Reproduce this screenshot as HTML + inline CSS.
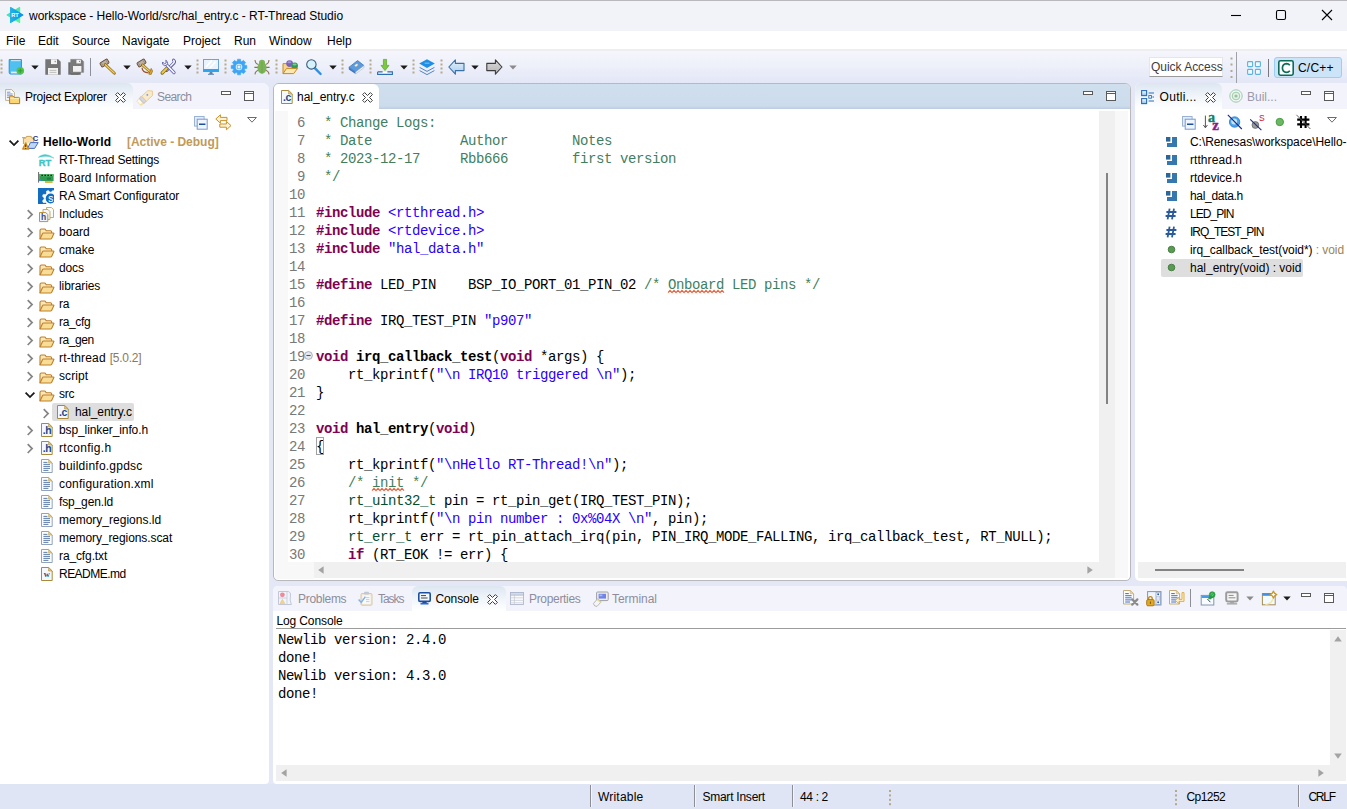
<!DOCTYPE html>
<html lang="en">
<head>
<meta charset="utf-8">
<title>workspace - Hello-World/src/hal_entry.c - RT-Thread Studio</title>
<style>
*{box-sizing:border-box;margin:0;padding:0}
html,body{width:1347px;height:809px;overflow:hidden}
body{position:relative;background:#e3e7f6;font-family:"Liberation Sans",sans-serif;font-size:12px;color:#000;line-height:1}
.abs,.t{position:absolute}
.t{white-space:pre;line-height:16px;height:16px}
svg{position:absolute;overflow:visible}
/* title + menu + toolbar */
#titlebar{left:0;top:0;width:1347px;height:31px;background:#f2f3f9}
#menubar{left:0;top:31px;width:1347px;height:20px;background:#fff;border-bottom:2px solid #eeeef0}
#toolbar{left:0;top:51px;width:1347px;height:32px;background:linear-gradient(#f5f6fc,#eef0fa 45%,#e3e7f6)}
.menu{top:33px}
/* panels */
.panel{position:absolute;background:#fff;overflow:hidden}
.mono{font-family:"Liberation Mono",monospace;font-size:14px;letter-spacing:-0.4px}
.cl{height:18px;line-height:18px}
.row{position:absolute;left:0;height:20px;line-height:20px;white-space:pre}
.dim{color:#8a8a8a}
/* code colours */
.ln{color:#787878}
.cm{color:#3f7f5f}
.kw{color:#7f0055;font-weight:bold}
.st{color:#2a00ff}
.fn{font-weight:bold}
.ty{color:#005032}
.sq{}
</style>
</head>
<body>

<!-- TITLE BAR -->
<div id="titlebar" class="abs"></div>
<div class="abs" style="left:0;top:0;width:1347px;height:1px;background:#b9b9bd"></div>
<svg style="left:5px;top:6px" width="20" height="18" viewBox="0 0 20 18">
 <defs><linearGradient id="gA" x1="0" y1="0" x2="1" y2="1"><stop offset="0" stop-color="#2fe0b0"/><stop offset="1" stop-color="#5cf59a"/></linearGradient>
 <linearGradient id="gB" x1="0" y1="0" x2="1" y2="0"><stop offset="0" stop-color="#1fb4e6"/><stop offset="1" stop-color="#0b8fe8"/></linearGradient></defs>
 <path d="M2.2 9 L14.6 1.6 L14.6 16.4 Z" fill="url(#gA)" stroke="url(#gA)" stroke-width="1.2" stroke-linejoin="round"/>
 <path d="M17.8 9 L5.6 1.6 L5.6 16.4 Z" fill="url(#gB)" stroke="url(#gB)" stroke-width="1.2" stroke-linejoin="round"/>
 <text x="10" y="11.2" font-family="Liberation Sans, sans-serif" font-weight="bold" font-size="5.6" fill="#fff" text-anchor="middle">RT</text>
</svg>
<div class="t" style="left:29px;top:8px;letter-spacing:-0.036px">workspace - Hello-World/src/hal_entry.c - RT-Thread Studio</div>
<svg style="left:1226px;top:5px" width="112" height="20" viewBox="0 0 112 20" fill="none" stroke="#000" stroke-width="1.1">
 <path d="M5 10.5 H15"/>
 <rect x="50.5" y="5.5" width="9" height="9" rx="1.6"/>
 <path d="M96 5 L106 15 M106 5 L96 15"/>
</svg>

<!-- MENU BAR -->
<div id="menubar" class="abs"></div>
<div class="t menu" style="left:6px">File</div>
<div class="t menu" style="left:38px">Edit</div>
<div class="t menu" style="left:72px">Source</div>
<div class="t menu" style="left:122px">Navigate</div>
<div class="t menu" style="left:183px">Project</div>
<div class="t menu" style="left:234px">Run</div>
<div class="t menu" style="left:269px">Window</div>
<div class="t menu" style="left:327px">Help</div>

<!-- TOOLBAR -->
<div id="toolbar" class="abs"></div>
<svg style="left:0px;top:59px" width="3" height="17" viewBox="0 0 3 17"><g fill="#b5a98c"><rect x="0.5" y="0.5" width="2" height="2"/><rect x="0.5" y="4.5" width="2" height="2"/><rect x="0.5" y="8.5" width="2" height="2"/><rect x="0.5" y="12.5" width="2" height="2"/></g></svg>
<svg style="left:8px;top:59px" width="17" height="16" viewBox="0 0 17 16">
<path d="M1.2 0.6 H13.4 V15 H2.6 Q1.2 15 1.2 13.6 Z" fill="#4fc0f0" stroke="#2b8fd6" stroke-width="1"/>
<rect x="3" y="1" width="9.6" height="1.2" fill="#bfe6fa"/>
<rect x="3" y="12.6" width="8" height="1.8" fill="#d8effc"/>
<circle cx="12.3" cy="11.8" r="3.8" fill="#52c24a"/>
<path d="M12.3 9.6 V14 M10.1 11.8 H14.5" stroke="#2f9e35" stroke-width="1"/>
</svg>
<svg style="left:31px;top:65px" width="8" height="5" viewBox="0 0 8 5"><path d="M0.3 0.5 H7.7 L4 4.4 Z" fill="#1a1a1a"/></svg>
<svg style="left:45px;top:59px" width="16" height="16" viewBox="0 0 16 16">
<path d="M0.3 0.3 H13.2 L15.7 2.8 V15.7 H0.3 Z" fill="#757575"/>
<rect x="6" y="0.3" width="6" height="4.8" fill="#f4f4f4"/><rect x="9.6" y="1.8" width="1.2" height="1.4" fill="#8a8a8a"/>
<rect x="3" y="9" width="10" height="6.7" fill="#f1f1ef"/>
<path d="M4.6 11.4 H11.4 M4.6 13.4 H11.4" stroke="#b9b9b9" stroke-width="0.9"/>
</svg>
<svg style="left:68px;top:59px" width="16" height="16" viewBox="0 0 16 16">
<path d="M0.3 3.3 H3 V15.7 H12.7 V13 H3 V3.3 Z" fill="#6a6a6a"/>
<path d="M0.3 3.3 H11 V15.7 H0.3 Z" fill="#6e6e6e"/>
<path d="M2.6 0.3 H13.4 L15.7 2.6 V13.4 H2.6 Z" fill="#7a7a7a" stroke="#8e8e8e" stroke-width="0.4"/>
<rect x="8.4" y="0.8" width="4.4" height="3.6" fill="#f4f4f4"/><rect x="11" y="1.8" width="1" height="1.2" fill="#8a8a8a"/>
<rect x="5" y="7" width="8.4" height="5.8" fill="#f1f1f1"/>
</svg>
<div class="abs" style="left:90px;top:58px;width:1px;height:18px;background:#8e8e9c"></div>
<svg style="left:100px;top:59px" width="16" height="16" viewBox="0 0 16 16"><g transform="rotate(-32 4.5 4)"><rect x="0.2" y="1.6" width="8.6" height="4.8" rx="1.2" fill="#b9b1a6" stroke="#6b4a36" stroke-width="0.9"/><path d="M1.8 2.6 V5.4 M7.2 2.6 V5.4" stroke="#8d8478" stroke-width="0.8"/></g>
<path d="M5.2 5.6 L14.4 14.2" stroke="#8a6a1a" stroke-width="2.8" stroke-linecap="round"/>
<path d="M5.4 5.8 L14.2 14" stroke="#f3ce54" stroke-width="1.4" stroke-linecap="round"/></svg>
<svg style="left:123px;top:65px" width="8" height="5" viewBox="0 0 8 5"><path d="M0.3 0.5 H7.7 L4 4.4 Z" fill="#1a1a1a"/></svg>
<svg style="left:137px;top:59px" width="17" height="16" viewBox="0 0 17 16">
<path d="M5 8.6 Q5.4 13.6 11.6 13.8" fill="none" stroke="#a0522d" stroke-width="1.2"/>
<g transform="rotate(-32 4.5 4)"><rect x="0.2" y="1.6" width="8.6" height="4.8" rx="1.2" fill="#b9b1a6" stroke="#6b4a36" stroke-width="0.9"/><path d="M1.8 2.6 V5.4 M7.2 2.6 V5.4" stroke="#8d8478" stroke-width="0.8"/></g>
<path d="M5.4 5.8 L13 12.8" stroke="#8a6a1a" stroke-width="2.6" stroke-linecap="round"/>
<path d="M5.6 6 L12.8 12.6" stroke="#f3ce54" stroke-width="1.3" stroke-linecap="round"/>
<path d="M14.2 9.4 L15.6 12 L14.2 15.4 L11.8 15.2 Z" fill="#e0a62a" stroke="#9a6a14" stroke-width="0.7"/>
</svg>
<svg style="left:160px;top:59px" width="17" height="16" viewBox="0 0 17 16">
<path d="M13.6 1.2 Q15.2 2.4 13.8 4.2 L6.6 11.4" fill="none" stroke="#5b5ba8" stroke-width="3.2" stroke-linecap="round"/>
<path d="M13.6 1.4 Q14.8 2.4 13.6 4 L6.6 11.2" fill="none" stroke="#f4f4fb" stroke-width="1.6" stroke-linecap="round"/>
<path d="M2.2 14 L7 9.2" stroke="#7d6a2a" stroke-width="3.4" stroke-linecap="round"/>
<path d="M2.4 13.8 L6.8 9.4" stroke="#f2c93e" stroke-width="2" stroke-linecap="round"/>
<path d="M6.4 5.6 L14 13.6" stroke="#5b5ba8" stroke-width="3.2" stroke-linecap="round"/>
<path d="M6.4 5.6 L14 13.6" stroke="#f4f4fb" stroke-width="1.6" stroke-linecap="round"/>
<path d="M2.6 3 Q1.6 5.6 4.4 6.6 Q7 7 7.6 4.6 Q7.6 2 5.8 1.2 L6.2 3.8 L4.6 4.8 L3.2 3.8 Z" fill="#f4f4fb" stroke="#5b5ba8" stroke-width="0.9" stroke-linejoin="round"/>
</svg>
<svg style="left:184px;top:65px" width="8" height="5" viewBox="0 0 8 5"><path d="M0.3 0.5 H7.7 L4 4.4 Z" fill="#1a1a1a"/></svg>
<svg style="left:196px;top:59px" width="3" height="17" viewBox="0 0 3 17"><g fill="#b5a98c"><rect x="0.5" y="0.5" width="2" height="2"/><rect x="0.5" y="4.5" width="2" height="2"/><rect x="0.5" y="8.5" width="2" height="2"/><rect x="0.5" y="12.5" width="2" height="2"/></g></svg>
<svg style="left:203px;top:59px" width="16" height="16" viewBox="0 0 16 16">
<rect x="0.5" y="0.5" width="15" height="12" fill="#e9f3fc" stroke="#6aa4dc" stroke-width="1"/>
<path d="M3 8 L9 1.4 M7 9 L12.6 2.6" stroke="#fff" stroke-width="1.6"/>
<rect x="0.2" y="10" width="15.6" height="2.9" fill="#2fa4ee"/>
<path d="M6.8 12.9 H9.2 L9.8 15 H6.2 Z" fill="#5a86ac"/>
<rect x="5" y="14.8" width="6" height="1" fill="#5a86ac"/>
</svg>
<svg style="left:224px;top:59px" width="3" height="17" viewBox="0 0 3 17"><g fill="#b5a98c"><rect x="0.5" y="0.5" width="2" height="2"/><rect x="0.5" y="4.5" width="2" height="2"/><rect x="0.5" y="8.5" width="2" height="2"/><rect x="0.5" y="12.5" width="2" height="2"/></g></svg>
<svg style="left:231px;top:59px" width="16" height="16" viewBox="0 0 16 16">
<path d="M6.41 0.16 L9.59 0.16 L9.80 2.17 L10.85 2.60 L12.42 1.33 L14.67 3.58 L13.40 5.15 L13.83 6.20 L15.84 6.41 L15.84 9.59 L13.83 9.80 L13.40 10.85 L14.67 12.42 L12.42 14.67 L10.85 13.40 L9.80 13.83 L9.59 15.84 L6.41 15.84 L6.20 13.83 L5.15 13.40 L3.58 14.67 L1.33 12.42 L2.60 10.85 L2.17 9.80 L0.16 9.59 L0.16 6.41 L2.17 6.20 L2.60 5.15 L1.33 3.58 L3.58 1.33 L5.15 2.60 L6.20 2.17 Z" fill="#3da5f3" stroke="#3da5f3" stroke-width="0.5" stroke-linejoin="round"/>
<circle cx="8" cy="8" r="3.3" fill="#d6ebfb"/>
<rect x="6.3" y="6.3" width="3.4" height="3.4" fill="#eaf4fd" stroke="#6fb8f2" stroke-width="0.8"/>
</svg>
<svg style="left:254px;top:59px" width="16" height="16" viewBox="0 0 16 16">
<g fill="none" stroke="#8d6e54" stroke-width="1.1"><path d="M1 1 Q1.2 4.6 4.4 5.6 M15 1 Q14.8 4.6 11.6 5.6 M0.4 8.4 H4 M15.6 8.4 H12 M1 15.4 Q1.2 12 4.4 11.2 M15 15.4 Q14.8 12 11.6 11.2"/></g>
<ellipse cx="8" cy="3.6" rx="3" ry="2.8" fill="#7bb458"/>
<ellipse cx="8" cy="8.8" rx="4.6" ry="5.9" fill="#7bb458"/>
<path d="M8 3 V14.6" stroke="#6aa048" stroke-width="0.7"/>
</svg>
<svg style="left:275px;top:59px" width="3" height="17" viewBox="0 0 3 17"><g fill="#b5a98c"><rect x="0.5" y="0.5" width="2" height="2"/><rect x="0.5" y="4.5" width="2" height="2"/><rect x="0.5" y="8.5" width="2" height="2"/><rect x="0.5" y="12.5" width="2" height="2"/></g></svg>
<svg style="left:282px;top:59px" width="17" height="16" viewBox="0 0 17 16">
<path d="M1 14.6 V4.6 H5.6 L7 6.2 H13 V9" fill="#f7d58c" stroke="#c98a1e" stroke-width="1"/>
<circle cx="7.6" cy="4.6" r="3.4" fill="#7a62b8"/><ellipse cx="7.4" cy="3.2" rx="2" ry="1" fill="#a595d6"/>
<circle cx="12.6" cy="6.8" r="3.4" fill="#2f9a56"/><ellipse cx="12.6" cy="5.4" rx="2" ry="1" fill="#7cc998"/>
<path d="M1 14.6 L4.6 9.4 H15.6 L11.6 14.6 Z" fill="#fbe7b4" stroke="#c98a1e" stroke-width="1" stroke-linejoin="round"/>
</svg>
<svg style="left:306px;top:59px" width="16" height="16" viewBox="0 0 16 16">
<path d="M8.6 8.8 L14.6 15" stroke="#2f8fe0" stroke-width="2.4" stroke-linecap="round"/>
<circle cx="5.4" cy="5.4" r="4.7" fill="#d3f2fb" stroke="#3d5a78" stroke-width="1.1"/>
</svg>
<svg style="left:329px;top:65px" width="8" height="5" viewBox="0 0 8 5"><path d="M0.3 0.5 H7.7 L4 4.4 Z" fill="#1a1a1a"/></svg>
<svg style="left:341px;top:59px" width="3" height="17" viewBox="0 0 3 17"><g fill="#b5a98c"><rect x="0.5" y="0.5" width="2" height="2"/><rect x="0.5" y="4.5" width="2" height="2"/><rect x="0.5" y="8.5" width="2" height="2"/><rect x="0.5" y="12.5" width="2" height="2"/></g></svg>
<svg style="left:348px;top:59px" width="17" height="16" viewBox="0 0 17 16">
<path d="M0.8 8.4 L9.6 1.6 L16 6.6 L7.6 13 Z" fill="#5c9be0" stroke="#3f78bc" stroke-width="0.8" stroke-linejoin="round"/>
<path d="M0.8 8.4 L7.6 13 L7.6 15 L0.8 10.4 Z" fill="#3f78bc"/>
<path d="M7.6 13 L16 6.6 V8.6 L7.6 15 Z" fill="#f4f4f4" stroke="#9ab" stroke-width="0.5"/>
<rect x="6.6" y="5.2" width="3.4" height="2" rx="1" fill="#fbf3dc" stroke="#c9b27a" stroke-width="0.5" transform="rotate(-30 8.3 6.2)"/>
</svg>
<svg style="left:369px;top:59px" width="3" height="17" viewBox="0 0 3 17"><g fill="#b5a98c"><rect x="0.5" y="0.5" width="2" height="2"/><rect x="0.5" y="4.5" width="2" height="2"/><rect x="0.5" y="8.5" width="2" height="2"/><rect x="0.5" y="12.5" width="2" height="2"/></g></svg>
<svg style="left:377px;top:59px" width="16" height="16" viewBox="0 0 16 16">
<path d="M6.4 0.4 H9.6 V6.4 H12 L8 11.6 L4 6.4 H6.4 Z" fill="#7cc840" stroke="#5aa02a" stroke-width="0.7" stroke-linejoin="round"/>
<path d="M0.6 12.9 H5.6 M10.4 12.9 H15.4 V15.4 H0.6 V12.9" fill="#fff" stroke="#2d6eb0" stroke-width="1.1"/>
</svg>
<svg style="left:400px;top:65px" width="8" height="5" viewBox="0 0 8 5"><path d="M0.3 0.5 H7.7 L4 4.4 Z" fill="#1a1a1a"/></svg>
<svg style="left:412px;top:59px" width="3" height="17" viewBox="0 0 3 17"><g fill="#b5a98c"><rect x="0.5" y="0.5" width="2" height="2"/><rect x="0.5" y="4.5" width="2" height="2"/><rect x="0.5" y="8.5" width="2" height="2"/><rect x="0.5" y="12.5" width="2" height="2"/></g></svg>
<svg style="left:419px;top:59px" width="16" height="16" viewBox="0 0 16 16">
<path d="M8 0.2 L15.8 4.6 L8 9 L0.2 4.6 Z" fill="#1f8fe6"/>
<path d="M5.6 4.2 H10.4" stroke="#7cc2f4" stroke-width="1.1"/>
<path d="M0.6 8.4 L8 12.4 L15.4 8.4 M0.6 11.6 L8 15.6 L15.4 11.6" fill="none" stroke="#3f78bc" stroke-width="0.9"/>
</svg>
<svg style="left:440px;top:59px" width="3" height="17" viewBox="0 0 3 17"><g fill="#b5a98c"><rect x="0.5" y="0.5" width="2" height="2"/><rect x="0.5" y="4.5" width="2" height="2"/><rect x="0.5" y="8.5" width="2" height="2"/><rect x="0.5" y="12.5" width="2" height="2"/></g></svg>
<svg style="left:448px;top:59px" width="17" height="16" viewBox="0 0 17 16">
<defs><linearGradient id="gBk" x1="0" y1="0" x2="0" y2="1"><stop offset="0" stop-color="#e4f1fb"/><stop offset="1" stop-color="#a9cdec"/></linearGradient></defs>
<path d="M7.4 0.8 V4.4 H16 V11.6 H7.4 V15.2 L0.8 8 Z" fill="url(#gBk)" stroke="#3a70a8" stroke-width="1.1" stroke-linejoin="round"/>
</svg>
<svg style="left:471px;top:65px" width="8" height="5" viewBox="0 0 8 5"><path d="M0.3 0.5 H7.7 L4 4.4 Z" fill="#1a1a1a"/></svg>
<svg style="left:486px;top:59px" width="17" height="16" viewBox="0 0 17 16">
<defs><linearGradient id="gFw" x1="0" y1="0" x2="0" y2="1"><stop offset="0" stop-color="#dadada"/><stop offset="1" stop-color="#b4b4b4"/></linearGradient></defs>
<path d="M9.4 0.8 V4.4 H0.8 V11.6 H9.4 V15.2 L16 8 Z" fill="url(#gFw)" stroke="#3c3c3c" stroke-width="1.1" stroke-linejoin="round"/>
</svg>
<svg style="left:509px;top:65px" width="8" height="5" viewBox="0 0 8 5"><path d="M0.3 0.5 H7.7 L4 4.4 Z" fill="#8a8a8a"/></svg>
<div class="abs" style="left:1149px;top:57px;width:74px;height:20px;background:#fff;border:1px solid #e6e6ea;border-bottom-color:#9a9a9a"></div>
<div class="t" style="left:1151px;top:59px;color:#3c3c3c;letter-spacing:-0.03px">Quick Access</div>
<svg style="left:1230px;top:57px" width="3" height="21" viewBox="0 0 3 21"><g fill="#b5a98c"><rect x="0.5" y="0.5" width="2" height="2"/><rect x="0.5" y="6.5" width="2" height="2"/><rect x="0.5" y="13" width="2" height="2"/><rect x="0.5" y="19" width="2" height="2"/></g></svg>
<div class="abs" style="left:1236px;top:52px;width:1px;height:31px;background:#a0a0a8"></div>
<svg style="left:1247px;top:61px" width="14" height="14" viewBox="0 0 14 14" fill="#eef8fd" stroke="#5cb3de" stroke-width="1.1">
<rect x="0.6" y="0.6" width="5" height="5" rx="0.8"/><rect x="8.4" y="0.6" width="5" height="5" rx="0.8"/><rect x="0.6" y="8.4" width="5" height="5" rx="0.8"/><rect x="8.4" y="8.4" width="5" height="5" rx="0.8"/></svg>
<div class="abs" style="left:1268px;top:59px;width:1px;height:18px;background:#77777f"></div>
<div class="abs" style="left:1274px;top:57px;width:68px;height:21px;background:#cce4f7;border:1px solid #9ccdf5;border-radius:3px"></div>
<svg style="left:1278px;top:60px" width="16" height="16" viewBox="0 0 16 16"><rect x="0.8" y="0.8" width="14.4" height="14.4" rx="1.6" fill="#fff" stroke="#0d6b58" stroke-width="1.6"/>
<path d="M11.8 5.2 Q10.6 3.6 8.4 3.6 Q4.6 3.8 4.4 8 Q4.6 12.2 8.4 12.4 Q10.6 12.4 11.8 10.8" fill="none" stroke="#0d6b58" stroke-width="1.7"/></svg>
<div class="t" style="left:1298px;top:60px;letter-spacing:0.2px">C/C++</div>


<!-- LEFT PANEL -->
<div id="left" class="panel" style="left:0;top:83px;width:269px;height:701px;border-radius:0 7px 4px 0"><div class="abs" style="left:0;top:1px;width:269px;height:699px">
<div class="abs" style="left:0;top:-1px;width:269px;height:26px;background:#f3f4fb"></div>
<div class="abs" style="left:0;top:-1px;width:133px;height:26px;background:linear-gradient(#dde6f1,#f2f6fa 55%,#fff);border-radius:0 6px 0 0"></div>
<svg style="left:5px;top:5px" width="16" height="16" viewBox="0 0 16 16"><path d="M0.6 0.6 H6.6 L9.4 3.4 V11.4 H0.6 Z" fill="#fbfcfe" stroke="#b9a98a" stroke-width="0.9"/><path d="M2 3.2 H5.4 M2 5 H7.6 M2 6.8 H7.6 M2 8.6 H4.4" stroke="#5a7abf" stroke-width="0.8"/><path d="M4.6 14.6 V8 Q4.6 7 5.6 7 H8 L9 8.4 H13.6 Q14.6 8.4 14.6 9.4 V14.6 Z" fill="#fbd774" stroke="#b9782e" stroke-width="1" stroke-linejoin="round"/><path d="M5.4 9.4 H14" stroke="#fdeeb8" stroke-width="0.9"/></svg>
<div class="t" style="left:25px;top:5px;letter-spacing:-0.22px">Project Explorer</div>
<svg style="left:115px;top:8px" width="11" height="11" viewBox="0 0 11 11"><path d="M0.6 2.6 L2.6 0.6 L5.5 3.5 L8.4 0.6 L10.4 2.6 L7.5 5.5 L10.4 8.4 L8.4 10.4 L5.5 7.5 L2.6 10.4 L0.6 8.4 L3.5 5.5 Z" fill="#fff" stroke="#3f3f3f" stroke-width="1" stroke-linejoin="round"/></svg>
<svg style="left:136px;top:5px;opacity:.62" width="18" height="17" viewBox="0 0 18 17"><g transform="translate(9.2 8.6) rotate(-42)"><path d="M-8.6 -3 L-5 -3.4 V3.4 L-8.6 3 Z" fill="#fffdf0" stroke="#f0d070" stroke-width="0.8"/><path d="M-8.6 2.2 L-5.4 2.6" stroke="#f5d860" stroke-width="1.4"/><rect x="-5" y="-3.6" width="3.4" height="7.2" rx="1.2" fill="#c4c4d0" stroke="#a89878" stroke-width="0.8"/><path d="M-1.6 -3.4 H6.6 L9.8 0 L6.6 3.4 H-1.6 Z" fill="#fbe6b0" stroke="#e8b050" stroke-width="0.9" stroke-linejoin="round"/><circle cx="3.4" cy="-0.6" r="1" fill="#3a6ad8"/></g></svg>
<div class="t" style="left:157px;top:5px;color:#8d8d9b;letter-spacing:-0.6px">Search</div>
<svg style="left:221px;top:7px" width="10" height="5" viewBox="0 0 10 5"><rect x="0.5" y="0.5" width="9" height="3" fill="#fff" stroke="#5a5a5a" stroke-width="1"/></svg>
<svg style="left:244px;top:7px" width="10" height="10" viewBox="0 0 10 10"><rect x="0.5" y="0.5" width="9" height="9" fill="#fff" stroke="#5a5a5a" stroke-width="1"/><path d="M0.5 2.5 H9.5" stroke="#5a5a5a" stroke-width="1"/></svg>
<svg style="left:194px;top:32px" width="14" height="14" viewBox="0 0 14 14"><rect x="0.5" y="0.5" width="9.6" height="9.6" fill="#e4eefb" stroke="#9ab2d6" stroke-width="1"/><rect x="3.2" y="3.2" width="10" height="10" fill="#eef5fd" stroke="#7a9acb" stroke-width="1"/><path d="M5 8.2 H11.4" stroke="#1d4f9c" stroke-width="1.6"/></svg>
<svg style="left:215px;top:30px" width="17" height="17" viewBox="0 0 17 17"><path d="M0.8 5 L5.4 0.8 V3.4 H12 V6.6 H5.4 V9.2 Z" fill="#fdf3d4" stroke="#c8922a" stroke-width="1" stroke-linejoin="round"/><path d="M16 11.6 L11.4 7.4 V10 H4.8 V13.2 H11.4 V15.8 Z" fill="#fdf3d4" stroke="#c8922a" stroke-width="1" stroke-linejoin="round"/></svg>
<svg style="left:247px;top:33px" width="10" height="6" viewBox="0 0 10 6"><path d="M0.6 0.5 H9.4 L5 5.2 Z" fill="#fff" stroke="#5a5a5a" stroke-width="0.9" stroke-linejoin="round"/></svg>
<svg style="left:8.5px;top:56px" width="10" height="6" viewBox="0 0 10 6"><path d="M0.6 0.7 L5 5.1 L9.4 0.7" fill="none" stroke="#1a1a1a" stroke-width="1.8"/></svg>
<svg style="left:21px;top:51px" width="18" height="16" viewBox="0 0 18 16"><path d="M1 2.6 H4.4" stroke="#8a94b0" stroke-width="0.8"/><path d="M2.4 9 V3.2 H4.6 L5.4 1.4 H10.2 L11 3.2 H12.8 V7" fill="#f9dfa6" stroke="#c09a50" stroke-width="0.9" stroke-linejoin="round"/><path d="M6.6 13.4 L9.4 7.6 H17.2 L13.6 13.4 Z" fill="#bdd8f5" stroke="#4a6ac0" stroke-width="1" stroke-linejoin="round"/><text x="14.6" y="6" font-family="Liberation Sans, sans-serif" font-weight="bold" font-size="7.6" fill="#173a86" text-anchor="middle">C</text><path d="M4.7 8 L7.6 14 H1.8 Z" fill="#fbd35a" stroke="#d08a1c" stroke-width="1.5" stroke-linejoin="round"/><path d="M4.7 9.6 V12.2 M4.7 13 V13.9" stroke="#3a2a10" stroke-width="1"/></svg>
<div class="row" style="left:43px;top:48px;font-weight:bold;letter-spacing:0.089px">Hello-World</div>
<div class="row" style="left:127px;top:48px;font-weight:bold;color:#bf9a5a;letter-spacing:-0.021px">[Active - Debug]</div>
<svg style="left:38px;top:70px" width="16" height="13" viewBox="0 0 16 13"><path d="M0.2 3.4 Q1.6 1.6 4.4 0.9 Q10.2 -0.6 16 4.2 Q10.4 1.6 5.4 2.4 Q2.4 2.8 0.2 3.4 Z" fill="#49c9c9" stroke="#49c9c9" stroke-width="0.4"/><text x="6.9" y="12.4" font-family="Liberation Sans, sans-serif" font-weight="bold" font-size="9.4" fill="#3ec4c4" stroke="#3ec4c4" stroke-width="0.35" text-anchor="middle" letter-spacing="-0.2">RT</text></svg>
<div class="row" style="left:59px;top:66px;letter-spacing:-0.208px">RT-Thread Settings</div>
<svg style="left:38px;top:88px" width="16" height="12" viewBox="0 0 16 12"><path d="M0.6 0 V10.6" stroke="#666" stroke-width="1"/><rect x="1.2" y="2" width="14.4" height="7" fill="#2f9a50"/><rect x="1.2" y="2" width="14.4" height="2.2" fill="#57b86c"/><path d="M3.4 3.4 H5 M6.4 3.4 H8 M9.4 3.4 H11 M12.4 3.4 H14" stroke="#1a1a1a" stroke-width="1.4"/><rect x="1.2" y="7" width="2" height="2" fill="#2f8fe8"/><rect x="7" y="9" width="7.6" height="2" fill="#d8b84a"/><rect x="9" y="5.6" width="4" height="2" fill="#1f7a3c"/></svg>
<div class="row" style="left:59px;top:84px;letter-spacing:0.107px">Board Information</div>
<svg style="left:38px;top:104px;overflow:hidden" width="16" height="16" viewBox="0 0 16 16"><rect width="16" height="16" fill="#126dc0"/><g transform="translate(12.6 10.5)"><path d="M2.24 -8.10 L4.10 -7.33 L4.07 -4.94 L4.91 -4.10 L7.31 -4.14 L8.08 -2.28 L6.37 -0.61 L6.37 0.58 L8.10 2.24 L7.33 4.10 L4.94 4.07 L4.10 4.91 L4.14 7.31 L2.28 8.08 L0.61 6.37 L-0.58 6.37 L-2.24 8.10 L-4.10 7.33 L-4.07 4.94 L-4.91 4.10 L-7.31 4.14 L-8.08 2.28 L-6.37 0.61 L-6.37 -0.58 L-8.10 -2.24 L-7.33 -4.10 L-4.94 -4.07 L-4.10 -4.91 L-4.14 -7.31 L-2.28 -8.08 L-0.61 -6.37 L0.58 -6.37 Z" fill="#fff" stroke="#fff" stroke-width="0.6" stroke-linejoin="round"/><circle r="4.9" fill="#126dc0"/></g><text transform="translate(12.7 13.8) scale(0.78 1)" x="0" y="0" font-family="Liberation Sans, sans-serif" font-size="9.4" fill="#fff" stroke="#fff" stroke-width="0.2" text-anchor="middle">S</text></svg>
<div class="row" style="left:59px;top:102px;letter-spacing:-0.021px">RA Smart Configurator</div>
<svg style="left:27px;top:125px" width="6" height="11" viewBox="0 0 6 11"><path d="M0.7 1.2 L5.1 5.6 L0.7 10" fill="none" stroke="#858585" stroke-width="1.7"/></svg>
<svg style="left:39px;top:123px" width="16" height="16" viewBox="0 0 16 16"><path d="M7.5 0.5 H12.4 L14.5 2.6 V10.5 H7.5 Z" fill="#fbfcfe" stroke="#c7ab6a" stroke-width="1"/><path d="M4 2.5 H9 L11 4.6 V12.5 H4 Z" fill="#f2f6fb" stroke="#c7ab6a" stroke-width="1"/><path d="M0.5 5.5 H6.8 L8.8 7.6 V14.6 H0.5 Z" fill="#eef3fa" stroke="#b9953f" stroke-width="1"/><text x="4.6" y="13.4" font-family="Liberation Sans, sans-serif" font-weight="bold" font-size="8.5" fill="#3b4f7a" text-anchor="middle">h</text></svg>
<div class="row" style="left:59px;top:120px;letter-spacing:-0.058px">Includes</div>
<svg style="left:27px;top:143px" width="6" height="11" viewBox="0 0 6 11"><path d="M0.7 1.2 L5.1 5.6 L0.7 10" fill="none" stroke="#858585" stroke-width="1.7"/></svg>
<svg style="left:38.6px;top:144px" width="16" height="12" viewBox="0 0 16 12"><path d="M1 11 V2.4 Q1 1 2.4 1 H5.4 Q6.4 1 6.8 2 L7.2 2.8 H11.6 Q12.6 2.8 12.6 3.8 V5" fill="#fbe7b4" stroke="#bd802a" stroke-width="1.1" stroke-linejoin="round"/><path d="M1 11 L3.6 5.4 Q3.8 5 4.4 5 H14.4 Q15.2 5 14.8 5.8 L12.6 10.4 Q12.4 11 11.6 11 Z" fill="#f9dc96" stroke="#bd802a" stroke-width="1.1" stroke-linejoin="round"/></svg>
<div class="row" style="left:59px;top:138px;letter-spacing:0.024px">board</div>
<svg style="left:27px;top:161px" width="6" height="11" viewBox="0 0 6 11"><path d="M0.7 1.2 L5.1 5.6 L0.7 10" fill="none" stroke="#858585" stroke-width="1.7"/></svg>
<svg style="left:38.6px;top:162px" width="16" height="12" viewBox="0 0 16 12"><path d="M1 11 V2.4 Q1 1 2.4 1 H5.4 Q6.4 1 6.8 2 L7.2 2.8 H11.6 Q12.6 2.8 12.6 3.8 V5" fill="#fbe7b4" stroke="#bd802a" stroke-width="1.1" stroke-linejoin="round"/><path d="M1 11 L3.6 5.4 Q3.8 5 4.4 5 H14.4 Q15.2 5 14.8 5.8 L12.6 10.4 Q12.4 11 11.6 11 Z" fill="#f9dc96" stroke="#bd802a" stroke-width="1.1" stroke-linejoin="round"/></svg>
<div class="row" style="left:59px;top:156px;letter-spacing:-0.011px">cmake</div>
<svg style="left:27px;top:179px" width="6" height="11" viewBox="0 0 6 11"><path d="M0.7 1.2 L5.1 5.6 L0.7 10" fill="none" stroke="#858585" stroke-width="1.7"/></svg>
<svg style="left:38.6px;top:180px" width="16" height="12" viewBox="0 0 16 12"><path d="M1 11 V2.4 Q1 1 2.4 1 H5.4 Q6.4 1 6.8 2 L7.2 2.8 H11.6 Q12.6 2.8 12.6 3.8 V5" fill="#fbe7b4" stroke="#bd802a" stroke-width="1.1" stroke-linejoin="round"/><path d="M1 11 L3.6 5.4 Q3.8 5 4.4 5 H14.4 Q15.2 5 14.8 5.8 L12.6 10.4 Q12.4 11 11.6 11 Z" fill="#f9dc96" stroke="#bd802a" stroke-width="1.1" stroke-linejoin="round"/></svg>
<div class="row" style="left:59px;top:174px;letter-spacing:-0.12px">docs</div>
<svg style="left:27px;top:197px" width="6" height="11" viewBox="0 0 6 11"><path d="M0.7 1.2 L5.1 5.6 L0.7 10" fill="none" stroke="#858585" stroke-width="1.7"/></svg>
<svg style="left:38.6px;top:198px" width="16" height="12" viewBox="0 0 16 12"><path d="M1 11 V2.4 Q1 1 2.4 1 H5.4 Q6.4 1 6.8 2 L7.2 2.8 H11.6 Q12.6 2.8 12.6 3.8 V5" fill="#fbe7b4" stroke="#bd802a" stroke-width="1.1" stroke-linejoin="round"/><path d="M1 11 L3.6 5.4 Q3.8 5 4.4 5 H14.4 Q15.2 5 14.8 5.8 L12.6 10.4 Q12.4 11 11.6 11 Z" fill="#f9dc96" stroke="#bd802a" stroke-width="1.1" stroke-linejoin="round"/></svg>
<div class="row" style="left:59px;top:192px;letter-spacing:-0.089px">libraries</div>
<svg style="left:27px;top:215px" width="6" height="11" viewBox="0 0 6 11"><path d="M0.7 1.2 L5.1 5.6 L0.7 10" fill="none" stroke="#858585" stroke-width="1.7"/></svg>
<svg style="left:38.6px;top:216px" width="16" height="12" viewBox="0 0 16 12"><path d="M1 11 V2.4 Q1 1 2.4 1 H5.4 Q6.4 1 6.8 2 L7.2 2.8 H11.6 Q12.6 2.8 12.6 3.8 V5" fill="#fbe7b4" stroke="#bd802a" stroke-width="1.1" stroke-linejoin="round"/><path d="M1 11 L3.6 5.4 Q3.8 5 4.4 5 H14.4 Q15.2 5 14.8 5.8 L12.6 10.4 Q12.4 11 11.6 11 Z" fill="#f9dc96" stroke="#bd802a" stroke-width="1.1" stroke-linejoin="round"/></svg>
<div class="row" style="left:59px;top:210px;letter-spacing:-0.3px">ra</div>
<svg style="left:27px;top:233px" width="6" height="11" viewBox="0 0 6 11"><path d="M0.7 1.2 L5.1 5.6 L0.7 10" fill="none" stroke="#858585" stroke-width="1.7"/></svg>
<svg style="left:38.6px;top:234px" width="16" height="12" viewBox="0 0 16 12"><path d="M1 11 V2.4 Q1 1 2.4 1 H5.4 Q6.4 1 6.8 2 L7.2 2.8 H11.6 Q12.6 2.8 12.6 3.8 V5" fill="#fbe7b4" stroke="#bd802a" stroke-width="1.1" stroke-linejoin="round"/><path d="M1 11 L3.6 5.4 Q3.8 5 4.4 5 H14.4 Q15.2 5 14.8 5.8 L12.6 10.4 Q12.4 11 11.6 11 Z" fill="#f9dc96" stroke="#bd802a" stroke-width="1.1" stroke-linejoin="round"/></svg>
<div class="row" style="left:59px;top:228px;letter-spacing:-0.352px">ra_cfg</div>
<svg style="left:27px;top:251px" width="6" height="11" viewBox="0 0 6 11"><path d="M0.7 1.2 L5.1 5.6 L0.7 10" fill="none" stroke="#858585" stroke-width="1.7"/></svg>
<svg style="left:38.6px;top:252px" width="16" height="12" viewBox="0 0 16 12"><path d="M1 11 V2.4 Q1 1 2.4 1 H5.4 Q6.4 1 6.8 2 L7.2 2.8 H11.6 Q12.6 2.8 12.6 3.8 V5" fill="#fbe7b4" stroke="#bd802a" stroke-width="1.1" stroke-linejoin="round"/><path d="M1 11 L3.6 5.4 Q3.8 5 4.4 5 H14.4 Q15.2 5 14.8 5.8 L12.6 10.4 Q12.4 11 11.6 11 Z" fill="#f9dc96" stroke="#bd802a" stroke-width="1.1" stroke-linejoin="round"/></svg>
<div class="row" style="left:59px;top:246px;letter-spacing:-0.415px">ra_gen</div>
<svg style="left:27px;top:269px" width="6" height="11" viewBox="0 0 6 11"><path d="M0.7 1.2 L5.1 5.6 L0.7 10" fill="none" stroke="#858585" stroke-width="1.7"/></svg>
<svg style="left:38.6px;top:270px" width="16" height="12" viewBox="0 0 16 12"><path d="M1 11 V2.4 Q1 1 2.4 1 H5.4 Q6.4 1 6.8 2 L7.2 2.8 H11.6 Q12.6 2.8 12.6 3.8 V5" fill="#fbe7b4" stroke="#bd802a" stroke-width="1.1" stroke-linejoin="round"/><path d="M1 11 L3.6 5.4 Q3.8 5 4.4 5 H14.4 Q15.2 5 14.8 5.8 L12.6 10.4 Q12.4 11 11.6 11 Z" fill="#f9dc96" stroke="#bd802a" stroke-width="1.1" stroke-linejoin="round"/></svg>
<div class="row" style="left:59px;top:264px;letter-spacing:0.155px">rt-thread<span style="color:#8a7a5c;letter-spacing:-0.25px;margin-left:4px">[5.0.2]</span></div>
<svg style="left:27px;top:287px" width="6" height="11" viewBox="0 0 6 11"><path d="M0.7 1.2 L5.1 5.6 L0.7 10" fill="none" stroke="#858585" stroke-width="1.7"/></svg>
<svg style="left:38.6px;top:288px" width="16" height="12" viewBox="0 0 16 12"><path d="M1 11 V2.4 Q1 1 2.4 1 H5.4 Q6.4 1 6.8 2 L7.2 2.8 H11.6 Q12.6 2.8 12.6 3.8 V5" fill="#fbe7b4" stroke="#bd802a" stroke-width="1.1" stroke-linejoin="round"/><path d="M1 11 L3.6 5.4 Q3.8 5 4.4 5 H14.4 Q15.2 5 14.8 5.8 L12.6 10.4 Q12.4 11 11.6 11 Z" fill="#f9dc96" stroke="#bd802a" stroke-width="1.1" stroke-linejoin="round"/></svg>
<div class="row" style="left:59px;top:282px;letter-spacing:0.106px">script</div>
<svg style="left:24.5px;top:308px" width="10" height="6" viewBox="0 0 10 6"><path d="M0.6 0.7 L5 5.1 L9.4 0.7" fill="none" stroke="#1a1a1a" stroke-width="1.8"/></svg>
<svg style="left:38.6px;top:306px" width="16" height="12" viewBox="0 0 16 12"><path d="M1 11 V2.4 Q1 1 2.4 1 H5.4 Q6.4 1 6.8 2 L7.2 2.8 H11.6 Q12.6 2.8 12.6 3.8 V5" fill="#fbe7b4" stroke="#bd802a" stroke-width="1.1" stroke-linejoin="round"/><path d="M1 11 L3.6 5.4 Q3.8 5 4.4 5 H14.4 Q15.2 5 14.8 5.8 L12.6 10.4 Q12.4 11 11.6 11 Z" fill="#f9dc96" stroke="#bd802a" stroke-width="1.1" stroke-linejoin="round"/></svg>
<div class="row" style="left:59px;top:300px;letter-spacing:-0.3px">src</div>
<div class="abs" style="left:52px;top:319px;width:82px;height:18px;background:#dedede;border-radius:2px"></div>
<svg style="left:43px;top:324px" width="6" height="11" viewBox="0 0 6 11"><path d="M0.7 1.2 L5.1 5.6 L0.7 10" fill="none" stroke="#858585" stroke-width="1.7"/></svg>
<svg style="left:57px;top:321px" width="12" height="14" viewBox="0 0 12 14"><path d="M0.5 0.5 H7.6 L11.2 4 V13.5 H0.5 Z" fill="#f4f8fd" stroke="#a88a3c" stroke-width="1"/><path d="M7.6 0.5 V4 H11.2 Z" fill="#e8c878" stroke="#a88a3c" stroke-width="0.6"/><text x="5.9" y="11.3" font-family="Liberation Sans, sans-serif" font-weight="bold" font-size="10.5" fill="#1a4a8a" text-anchor="middle" letter-spacing="-0.5">.c</text></svg>
<div class="row" style="left:75px;top:318px;letter-spacing:-0.091px">hal_entry.c</div>
<svg style="left:27px;top:341px" width="6" height="11" viewBox="0 0 6 11"><path d="M0.7 1.2 L5.1 5.6 L0.7 10" fill="none" stroke="#858585" stroke-width="1.7"/></svg>
<svg style="left:41px;top:339px" width="12" height="14" viewBox="0 0 12 14"><path d="M0.5 0.5 H7.6 L11.2 4 V13.5 H0.5 Z" fill="#f4f8fd" stroke="#a88a3c" stroke-width="1"/><path d="M7.6 0.5 V4 H11.2 Z" fill="#e8c878" stroke="#a88a3c" stroke-width="0.6"/><text x="5.9" y="11.3" font-family="Liberation Sans, sans-serif" font-weight="bold" font-size="10.5" fill="#1a4a8a" text-anchor="middle" letter-spacing="-0.5">.h</text></svg>
<div class="row" style="left:59px;top:336px;letter-spacing:-0.102px">bsp_linker_info.h</div>
<svg style="left:27px;top:359px" width="6" height="11" viewBox="0 0 6 11"><path d="M0.7 1.2 L5.1 5.6 L0.7 10" fill="none" stroke="#858585" stroke-width="1.7"/></svg>
<svg style="left:41px;top:357px" width="12" height="14" viewBox="0 0 12 14"><path d="M0.5 0.5 H7.6 L11.2 4 V13.5 H0.5 Z" fill="#f4f8fd" stroke="#a88a3c" stroke-width="1"/><path d="M7.6 0.5 V4 H11.2 Z" fill="#e8c878" stroke="#a88a3c" stroke-width="0.6"/><text x="5.9" y="11.3" font-family="Liberation Sans, sans-serif" font-weight="bold" font-size="10.5" fill="#1a4a8a" text-anchor="middle" letter-spacing="-0.5">.h</text></svg>
<div class="row" style="left:59px;top:354px;letter-spacing:0.305px">rtconfig.h</div>
<svg style="left:41px;top:375px" width="12" height="14" viewBox="0 0 12 14"><path d="M0.5 0.5 H7.6 L11.2 4 V13.5 H0.5 Z" fill="#fafcff" stroke="#93a3bb" stroke-width="1"/><path d="M7.6 0.5 V4 H11.2 Z" fill="#e8cf90" stroke="#b9a15c" stroke-width="0.6"/><path d="M2.4 3.4 H6.4 M2.4 5.4 H9 M2.4 7.4 H9 M2.4 9.4 H9 M2.4 11.4 H7.4" stroke="#4f6f9f" stroke-width="0.9"/></svg>
<div class="row" style="left:59px;top:372px;letter-spacing:0.231px">buildinfo.gpdsc</div>
<svg style="left:41px;top:393px" width="12" height="14" viewBox="0 0 12 14"><path d="M0.5 0.5 H7.6 L11.2 4 V13.5 H0.5 Z" fill="#fafcff" stroke="#93a3bb" stroke-width="1"/><path d="M7.6 0.5 V4 H11.2 Z" fill="#e8cf90" stroke="#b9a15c" stroke-width="0.6"/><path d="M2.4 3.4 H6.4 M2.4 5.4 H9 M2.4 7.4 H9 M2.4 9.4 H9 M2.4 11.4 H7.4" stroke="#4f6f9f" stroke-width="0.9"/></svg>
<div class="row" style="left:59px;top:390px;letter-spacing:0.224px">configuration.xml</div>
<svg style="left:41px;top:411px" width="12" height="14" viewBox="0 0 12 14"><path d="M0.5 0.5 H7.6 L11.2 4 V13.5 H0.5 Z" fill="#fafcff" stroke="#93a3bb" stroke-width="1"/><path d="M7.6 0.5 V4 H11.2 Z" fill="#e8cf90" stroke="#b9a15c" stroke-width="0.6"/><path d="M2.4 3.4 H6.4 M2.4 5.4 H9 M2.4 7.4 H9 M2.4 9.4 H9 M2.4 11.4 H7.4" stroke="#4f6f9f" stroke-width="0.9"/></svg>
<div class="row" style="left:59px;top:408px;letter-spacing:-0.143px">fsp_gen.ld</div>
<svg style="left:41px;top:429px" width="12" height="14" viewBox="0 0 12 14"><path d="M0.5 0.5 H7.6 L11.2 4 V13.5 H0.5 Z" fill="#fafcff" stroke="#93a3bb" stroke-width="1"/><path d="M7.6 0.5 V4 H11.2 Z" fill="#e8cf90" stroke="#b9a15c" stroke-width="0.6"/><path d="M2.4 3.4 H6.4 M2.4 5.4 H9 M2.4 7.4 H9 M2.4 9.4 H9 M2.4 11.4 H7.4" stroke="#4f6f9f" stroke-width="0.9"/></svg>
<div class="row" style="left:59px;top:426px;letter-spacing:0.003px">memory_regions.ld</div>
<svg style="left:41px;top:447px" width="12" height="14" viewBox="0 0 12 14"><path d="M0.5 0.5 H7.6 L11.2 4 V13.5 H0.5 Z" fill="#fafcff" stroke="#93a3bb" stroke-width="1"/><path d="M7.6 0.5 V4 H11.2 Z" fill="#e8cf90" stroke="#b9a15c" stroke-width="0.6"/><path d="M2.4 3.4 H6.4 M2.4 5.4 H9 M2.4 7.4 H9 M2.4 9.4 H9 M2.4 11.4 H7.4" stroke="#4f6f9f" stroke-width="0.9"/></svg>
<div class="row" style="left:59px;top:444px;letter-spacing:-0.079px">memory_regions.scat</div>
<svg style="left:41px;top:465px" width="12" height="14" viewBox="0 0 12 14"><path d="M0.5 0.5 H7.6 L11.2 4 V13.5 H0.5 Z" fill="#fafcff" stroke="#93a3bb" stroke-width="1"/><path d="M7.6 0.5 V4 H11.2 Z" fill="#e8cf90" stroke="#b9a15c" stroke-width="0.6"/><path d="M2.4 3.4 H6.4 M2.4 5.4 H9 M2.4 7.4 H9 M2.4 9.4 H9 M2.4 11.4 H7.4" stroke="#4f6f9f" stroke-width="0.9"/></svg>
<div class="row" style="left:59px;top:462px;letter-spacing:-0.118px">ra_cfg.txt</div>
<svg style="left:41px;top:483px" width="12" height="14" viewBox="0 0 12 14"><path d="M0.5 0.5 H7.6 L11.2 4 V13.5 H0.5 Z" fill="#f4f8fd" stroke="#a88a3c" stroke-width="1"/><path d="M7.6 0.5 V4 H11.2 Z" fill="#e8c878" stroke="#a88a3c" stroke-width="0.6"/><text x="5.9" y="10.2" font-family="Liberation Serif, serif" font-weight="bold" font-size="8.5" fill="#2a4a7c" text-anchor="middle">w</text></svg>
<div class="row" style="left:59px;top:480px;letter-spacing:-0.53px">README.md</div>
</div></div>
<!-- EDITOR PANEL -->
<div id="editor" class="panel" style="left:273px;top:83px;width:858px;height:498px;border:1px solid #b9b9bd;border-radius:6px 6px 5px 5px">
<div class="abs" style="left:0;top:0;width:856px;height:25px;background:linear-gradient(#cfdfee 0,#cddcec 88%,#bccbe0 100%)"></div>
<div class="abs" style="left:0;top:0;width:105px;height:26px;background:#fff;border-radius:0 6px 0 0"></div>
<svg style="left:7px;top:6px" width="12" height="14" viewBox="0 0 12 14"><path d="M0.5 0.5 H7.6 L11.2 4 V13.5 H0.5 Z" fill="#f4f8fd" stroke="#a88a3c" stroke-width="1"/><path d="M7.6 0.5 V4 H11.2 Z" fill="#e8c878" stroke="#a88a3c" stroke-width="0.6"/><text x="5.9" y="11.3" font-family="Liberation Sans, sans-serif" font-weight="bold" font-size="10.5" fill="#1a4a8a" text-anchor="middle" letter-spacing="-0.5">.c</text></svg>
<div class="t" style="left:23px;top:5px;letter-spacing:0">hal_entry.c</div>
<svg style="left:88px;top:8px" width="11" height="11" viewBox="0 0 11 11"><path d="M0.6 2.6 L2.6 0.6 L5.5 3.5 L8.4 0.6 L10.4 2.6 L7.5 5.5 L10.4 8.4 L8.4 10.4 L5.5 7.5 L2.6 10.4 L0.6 8.4 L3.5 5.5 Z" fill="#fff" stroke="#3f3f3f" stroke-width="1" stroke-linejoin="round"/></svg>
<svg style="left:809px;top:7px" width="10" height="5" viewBox="0 0 10 5"><rect x="0.5" y="0.5" width="9" height="3" fill="#fff" stroke="#5a5a5a" stroke-width="1"/></svg>
<svg style="left:832px;top:7px" width="10" height="10" viewBox="0 0 10 10"><rect x="0.5" y="0.5" width="9" height="9" fill="#fff" stroke="#5a5a5a" stroke-width="1"/><path d="M0.5 2.5 H9.5" stroke="#5a5a5a" stroke-width="1"/></svg>
<div class="abs" style="left:1px;top:27px;width:13px;height:468px;background:#f8f8f8"></div>
<div class="abs" style="left:14px;top:478px;width:26px;height:17px;background:#f8f8f8"></div>
<div class="abs" style="left:39px;top:27px;width:1px;height:451px;background:#f0f0f0"></div>
<div class="abs mono" style="left:14px;top:27px;width:811px;height:451px;overflow:hidden;background:#fff">
<div class="row cl ln" style="left:0;top:2px;width:16.9px;text-align:right">6</div>
<div class="row cl" style="left:28px;top:2px"><span class="cm"> * Change Logs:</span></div>
<div class="row cl ln" style="left:0;top:20px;width:16.9px;text-align:right">7</div>
<div class="row cl" style="left:28px;top:20px"><span class="cm"> * Date           Author        Notes</span></div>
<div class="row cl ln" style="left:0;top:38px;width:16.9px;text-align:right">8</div>
<div class="row cl" style="left:28px;top:38px"><span class="cm"> * 2023-12-17     Rbb666        first version</span></div>
<div class="row cl ln" style="left:0;top:56px;width:16.9px;text-align:right">9</div>
<div class="row cl" style="left:28px;top:56px"><span class="cm"> */</span></div>
<div class="row cl ln" style="left:0;top:74px;width:16.9px;text-align:right">10</div>
<div class="row cl ln" style="left:0;top:92px;width:16.9px;text-align:right">11</div>
<div class="row cl" style="left:28px;top:92px"><span class="kw">#include</span> <span class="st">&lt;rtthread.h&gt;</span></div>
<div class="row cl ln" style="left:0;top:110px;width:16.9px;text-align:right">12</div>
<div class="row cl" style="left:28px;top:110px"><span class="kw">#include</span> <span class="st">&lt;rtdevice.h&gt;</span></div>
<div class="row cl ln" style="left:0;top:128px;width:16.9px;text-align:right">13</div>
<div class="row cl" style="left:28px;top:128px"><span class="kw">#include</span> <span class="st">"hal_data.h"</span></div>
<div class="row cl ln" style="left:0;top:146px;width:16.9px;text-align:right">14</div>
<div class="row cl ln" style="left:0;top:164px;width:16.9px;text-align:right">15</div>
<div class="row cl" style="left:28px;top:164px"><span class="kw">#define</span> LED_PIN    BSP_IO_PORT_01_PIN_02 <span class="cm">/* </span><span class="cm sq">Onboard</span><span class="cm"> LED pins */</span></div>
<div class="row cl ln" style="left:0;top:182px;width:16.9px;text-align:right">16</div>
<div class="row cl ln" style="left:0;top:200px;width:16.9px;text-align:right">17</div>
<div class="row cl" style="left:28px;top:200px"><span class="kw">#define</span> IRQ_TEST_PIN <span class="st">"p907"</span></div>
<div class="row cl ln" style="left:0;top:218px;width:16.9px;text-align:right">18</div>
<div class="row cl ln" style="left:0;top:236px;width:16.9px;text-align:right">19</div>
<div class="row cl" style="left:28px;top:236px"><span class="kw">void</span> <span class="fn">irq_callback_test</span>(<span class="kw">void</span> *args) {</div>
<div class="row cl ln" style="left:0;top:254px;width:16.9px;text-align:right">20</div>
<div class="row cl" style="left:28px;top:254px">    rt_kprintf(<span class="st">"\n IRQ10 triggered \n"</span>);</div>
<div class="row cl ln" style="left:0;top:272px;width:16.9px;text-align:right">21</div>
<div class="row cl" style="left:28px;top:272px">}</div>
<div class="row cl ln" style="left:0;top:290px;width:16.9px;text-align:right">22</div>
<div class="row cl ln" style="left:0;top:308px;width:16.9px;text-align:right">23</div>
<div class="row cl" style="left:28px;top:308px"><span class="kw">void</span> <span class="fn">hal_entry</span>(<span class="kw">void</span>)</div>
<div class="row cl ln" style="left:0;top:326px;width:16.9px;text-align:right">24</div>
<div class="row cl" style="left:28px;top:326px">{</div>
<div class="row cl ln" style="left:0;top:344px;width:16.9px;text-align:right">25</div>
<div class="row cl" style="left:28px;top:344px">    rt_kprintf(<span class="st">"\nHello RT-Thread!\n"</span>);</div>
<div class="row cl ln" style="left:0;top:362px;width:16.9px;text-align:right">26</div>
<div class="row cl" style="left:28px;top:362px">    <span class="cm">/* </span><span class="cm sq">init</span><span class="cm"> */</span></div>
<div class="row cl ln" style="left:0;top:380px;width:16.9px;text-align:right">27</div>
<div class="row cl" style="left:28px;top:380px">    <span class="ty">rt_uint32_t</span> pin = rt_pin_get(IRQ_TEST_PIN);</div>
<div class="row cl ln" style="left:0;top:398px;width:16.9px;text-align:right">28</div>
<div class="row cl" style="left:28px;top:398px">    rt_kprintf(<span class="st">"\n pin number : 0x%04X \n"</span>, pin);</div>
<div class="row cl ln" style="left:0;top:416px;width:16.9px;text-align:right">29</div>
<div class="row cl" style="left:28px;top:416px">    <span class="ty">rt_err_t</span> err = rt_pin_attach_irq(pin, PIN_IRQ_MODE_FALLING, irq_callback_test, RT_NULL);</div>
<div class="row cl ln" style="left:0;top:434px;width:16.9px;text-align:right">30</div>
<div class="row cl" style="left:28px;top:434px">    <span class="kw">if</span> (RT_EOK != err) {</div>
</div>
<svg style="left:30px;top:267.3px" width="9" height="9" viewBox="0 0 9 9"><circle cx="4.5" cy="4.5" r="3.9" fill="#e6e9f0" stroke="#a0a8b8" stroke-width="0.9"/><path d="M2.4 4.5 H6.6" stroke="#4a5568" stroke-width="1.1"/></svg>
<div class="abs" style="left:42px;top:353px;width:8px;height:18px;border:1px solid #a0a0a0"></div>
<svg style="left:394px;top:206px" width="56" height="3" viewBox="0 0 56 3"><polyline points="0,2.6 2,0.4 4,2.6 6,0.4 8,2.6 10,0.4 12,2.6 14,0.4 16,2.6 18,0.4 20,2.6 22,0.4 24,2.6 26,0.4 28,2.6 30,0.4 32,2.6 34,0.4 36,2.6 38,0.4 40,2.6 42,0.4 44,2.6 46,0.4 48,2.6 50,0.4 52,2.6 54,0.4 56,2.6" fill="none" stroke="#f0603a" stroke-width="1.1"/></svg>
<svg style="left:98px;top:404px" width="32" height="3" viewBox="0 0 32 3"><polyline points="0,2.6 2,0.4 4,2.6 6,0.4 8,2.6 10,0.4 12,2.6 14,0.4 16,2.6 18,0.4 20,2.6 22,0.4 24,2.6 26,0.4 28,2.6 30,0.4 32,2.6" fill="none" stroke="#f0603a" stroke-width="1.1"/></svg>
<div class="abs" style="left:825px;top:27px;width:16px;height:467px;background:#f0f0f0"></div>
<div class="abs" style="left:841px;top:27px;width:13px;height:467px;background:#f8f8f8"></div>
<div class="abs" style="left:832px;top:89px;width:2px;height:231px;background:#838383"></div>
<div class="abs" style="left:40px;top:478px;width:785px;height:16px;background:#f0f0f0"></div>
<svg style="left:44px;top:482px" width="6" height="8" viewBox="0 0 6 8"><path d="M5.6 0.2 V7.8 L0.2 4 Z" fill="#a3a3a3"/></svg>
<svg style="left:813px;top:482px" width="6" height="8" viewBox="0 0 6 8"><path d="M0.4 0.2 V7.8 L5.8 4 Z" fill="#a3a3a3"/></svg>
</div>
<!-- OUTLINE PANEL -->
<div id="outline" class="panel" style="left:1135px;top:83px;width:212px;height:498px;border-radius:6px 0 0 5px"><div class="abs" style="left:0;top:1px;width:212px;height:497px">
<div class="abs" style="left:0;top:-1px;width:212px;height:26px;background:#f3f4fb"></div>
<div class="abs" style="left:0;top:-1px;width:87px;height:26px;background:linear-gradient(#dde6f1,#f2f6fa 55%,#fff);border-radius:0 6px 0 0"></div>
<svg style="left:6px;top:6px" width="14" height="15" viewBox="0 0 14 15"><defs><linearGradient id="gO" x1="0" y1="0" x2="0" y2="1"><stop offset="0" stop-color="#fff"/><stop offset="1" stop-color="#8ec0ee"/></linearGradient></defs><rect x="0.6" y="0.6" width="5" height="5" fill="url(#gO)" stroke="#2a6cb8" stroke-width="1.1"/><rect x="0.6" y="8.6" width="5" height="5" fill="url(#gO)" stroke="#2a6cb8" stroke-width="1.1"/><path d="M7.6 3 H13 M7.6 11 H13 M11.4 7 H13" stroke="#2a6cb8" stroke-width="1"/><rect x="7.8" y="5.6" width="2.6" height="2.6" fill="#fff" stroke="#2a6cb8" stroke-width="0.9"/></svg>
<div class="t" style="left:24.59999999999991px;top:5px;letter-spacing:0.3px">Outli...</div>
<svg style="left:70px;top:8px" width="11" height="11" viewBox="0 0 11 11"><path d="M0.6 2.6 L2.6 0.6 L5.5 3.5 L8.4 0.6 L10.4 2.6 L7.5 5.5 L10.4 8.4 L8.4 10.4 L5.5 7.5 L2.6 10.4 L0.6 8.4 L3.5 5.5 Z" fill="#fff" stroke="#3f3f3f" stroke-width="1" stroke-linejoin="round"/></svg>
<svg style="left:94px;top:5px;opacity:.55" width="14" height="14" viewBox="0 0 14 14"><circle cx="7" cy="7" r="6.2" fill="#f2faf2" stroke="#5aa86a" stroke-width="1"/><circle cx="7" cy="7" r="3.8" fill="#d8efd8" stroke="#5aa86a" stroke-width="1"/><circle cx="7" cy="7" r="1.6" fill="#4a9a5a"/></svg>
<div class="t" style="left:112px;top:5px;color:#9a9aab">Buil...</div>
<svg style="left:166px;top:7px" width="10" height="5" viewBox="0 0 10 5"><rect x="0.5" y="0.5" width="9" height="3" fill="#fff" stroke="#5a5a5a" stroke-width="1"/></svg>
<svg style="left:189px;top:7px" width="10" height="10" viewBox="0 0 10 10"><rect x="0.5" y="0.5" width="9" height="9" fill="#fff" stroke="#5a5a5a" stroke-width="1"/><path d="M0.5 2.5 H9.5" stroke="#5a5a5a" stroke-width="1"/></svg>
<svg style="left:47px;top:32px" width="14" height="14" viewBox="0 0 14 14"><rect x="0.5" y="0.5" width="9.6" height="9.6" fill="#e4eefb" stroke="#9ab2d6" stroke-width="1"/><rect x="3.2" y="3.2" width="10" height="10" fill="#eef5fd" stroke="#7a9acb" stroke-width="1"/><path d="M5 8.2 H11.4" stroke="#1d4f9c" stroke-width="1.6"/></svg>
<svg style="left:68px;top:30px" width="17" height="17" viewBox="0 0 17 17"><path d="M2.4 1.6 V13.4 M0.4 11 L2.4 13.8 L4.4 11" fill="none" stroke="#555" stroke-width="1"/><text x="5" y="7.8" font-family="Liberation Serif, serif" font-weight="bold" font-size="14" fill="#12806a" stroke="#12806a" stroke-width="0.4">a</text><text x="9.2" y="16.4" font-family="Liberation Serif, serif" font-weight="bold" font-size="15" fill="#8a1a8a" stroke="#8a1a8a" stroke-width="0.4">z</text></svg>
<svg style="left:92px;top:30px" width="16" height="16" viewBox="0 0 16 16"><circle cx="7.6" cy="8" r="5.2" fill="#4aa4ea" stroke="#2a7ad0" stroke-width="0.8"/><circle cx="7.2" cy="7.4" r="3" fill="#c4e4fa"/><path d="M0.8 0.8 L14.8 15" stroke="#1a2a8a" stroke-width="1.1"/></svg>
<svg style="left:115px;top:30px" width="15" height="17" viewBox="0 0 15 17"><circle cx="5.4" cy="11" r="3.4" fill="#9a9a9a" stroke="#6a6a6a" stroke-width="0.8"/><path d="M0.2 5.4 L11.4 16.2" stroke="#1a2a8a" stroke-width="1.1"/><text x="9" y="7.4" font-family="Liberation Sans, sans-serif" font-size="8.5" fill="#d0103a">S</text></svg>
<svg style="left:140px;top:33px" width="10" height="10" viewBox="0 0 10 10"><circle cx="4.8" cy="5" r="3.7" fill="#6cb860" stroke="#4a9e48" stroke-width="1"/></svg>
<svg style="left:161px;top:30px" width="15" height="15" viewBox="0 0 15 15"><path d="M5 2 V14 M9.6 2 V14 M1.2 5.6 H13.4 M1.2 10.4 H13.4" stroke="#000" stroke-width="2.1"/><path d="M0.4 0.8 L14.4 15" stroke="#555" stroke-width="0.9"/></svg>
<svg style="left:192px;top:33px" width="10" height="6" viewBox="0 0 10 6"><path d="M0.6 0.5 H9.4 L5 5.2 Z" fill="#fff" stroke="#5a5a5a" stroke-width="0.9" stroke-linejoin="round"/></svg>
<svg style="left:31px;top:53px" width="11" height="10" viewBox="0 0 11 10"><rect x="0" y="0" width="4.4" height="4.6" fill="#2c6698"/><path d="M6 0 H11 V10 H1 V6 H6 Z" fill="#3577ae"/></svg>
<div class="row" style="left:55px;top:48px;letter-spacing:-0.06px">C:\Renesas\workspace\Hello-<span style="margin-left:4px">World\src\hal_entry.c</span></div>
<svg style="left:31px;top:71px" width="11" height="10" viewBox="0 0 11 10"><rect x="0" y="0" width="4.4" height="4.6" fill="#2c6698"/><path d="M6 0 H11 V10 H1 V6 H6 Z" fill="#3577ae"/></svg>
<div class="row" style="left:55px;top:66px;letter-spacing:0.069px">rtthread.h</div>
<svg style="left:31px;top:89px" width="11" height="10" viewBox="0 0 11 10"><rect x="0" y="0" width="4.4" height="4.6" fill="#2c6698"/><path d="M6 0 H11 V10 H1 V6 H6 Z" fill="#3577ae"/></svg>
<div class="row" style="left:55px;top:84px;letter-spacing:-0.003px">rtdevice.h</div>
<svg style="left:31px;top:107px" width="11" height="10" viewBox="0 0 11 10"><rect x="0" y="0" width="4.4" height="4.6" fill="#2c6698"/><path d="M6 0 H11 V10 H1 V6 H6 Z" fill="#3577ae"/></svg>
<div class="row" style="left:55px;top:102px;letter-spacing:-0.307px">hal_data.h</div>
<svg style="left:30px;top:124px" width="12" height="12" viewBox="0 0 12 12"><path d="M4.6 0.6 L2.6 11.4 M9 0.6 L7 11.4 M1.4 4 H11.4 M0.6 8 H10.6" stroke="#2a5a9a" stroke-width="1.8"/></svg>
<div class="row" style="left:55px;top:120px;letter-spacing:-0.939px">LED_PIN</div>
<svg style="left:30px;top:142px" width="12" height="12" viewBox="0 0 12 12"><path d="M4.6 0.6 L2.6 11.4 M9 0.6 L7 11.4 M1.4 4 H11.4 M0.6 8 H10.6" stroke="#2a5a9a" stroke-width="1.8"/></svg>
<div class="row" style="left:55px;top:138px;letter-spacing:-1.005px">IRQ_TEST_PIN</div>
<svg style="left:32px;top:161px" width="9" height="9" viewBox="0 0 9 9"><circle cx="4.5" cy="4.5" r="3.3" fill="#5a9a52" stroke="#3f7a3a" stroke-width="0.9"/></svg>
<div class="row" style="left:55px;top:156px;letter-spacing:-0.066px">irq_callback_test(void*)<span style="color:#9a8556"> : void</span></div>
<div class="abs" style="left:26px;top:175px;width:142px;height:18px;background:#dedede;border-radius:2px"></div>
<svg style="left:32px;top:179px" width="9" height="9" viewBox="0 0 9 9"><circle cx="4.5" cy="4.5" r="3.3" fill="#5a9a52" stroke="#3f7a3a" stroke-width="0.9"/></svg>
<div class="row" style="left:55px;top:174px;letter-spacing:0.0px">hal_entry(void) : void</div>
<div class="abs" style="left:3px;top:478px;width:208px;height:16px;background:#f0f0f0"></div>
<div class="abs" style="left:20px;top:485px;width:89px;height:2px;background:#838383"></div>
</div></div>
<!-- BOTTOM PANEL -->
<div id="bottom" class="panel" style="left:273px;top:586px;width:1074px;height:198px;border-radius:5px 5px 0 4px">
<div class="abs" style="left:0;top:0;width:1074px;height:25px;background:#f3f4fb"></div>
<div class="abs" style="left:139px;top:0;width:94px;height:25px;background:linear-gradient(#dde6f1,#f2f6fa 55%,#fff);border-radius:6px 6px 0 0"></div>
<svg style="left:5px;top:5.399999999999977px;opacity:.55" width="14" height="14" viewBox="0 0 14 14"><path d="M0.5 0.5 H10.4 Q13.4 1.4 12.4 5 Q11.4 9 13.4 13.5 H0.5 Z" fill="#eef5fc" stroke="#8a9ab8" stroke-width="0.9"/><path d="M0.5 7 H9 M9 0.5 V13.5" stroke="#9ab" stroke-width="0.8"/><circle cx="4.4" cy="3.8" r="2.4" fill="#e8384a"/><path d="M4.4 8.4 L6.8 12.6 H2 Z" fill="#f5b82e" stroke="#d89a1a" stroke-width="0.6"/></svg>
<div class="t" style="left:25px;top:5px;color:#8d8d9b;letter-spacing:-0.298px">Problems</div>
<svg style="left:85px;top:5px;opacity:.55" width="15" height="15" viewBox="0 0 15 15"><rect x="3" y="2.6" width="11" height="11.6" rx="1" fill="#f5e6c0" stroke="#b8985a" stroke-width="0.9"/><rect x="4.6" y="4.4" width="7.8" height="8.4" fill="#fff"/><rect x="6" y="0.8" width="5" height="2.8" rx="0.8" fill="#9aa4b8"/><path d="M8 6.6 H11.4 M8 8.6 H11.4 M8 10.6 H11.4" stroke="#8a9ab8" stroke-width="0.8"/><path d="M0.6 8.6 L3.2 11.4 L7.4 5.6" fill="none" stroke="#2a7ad8" stroke-width="1.5"/></svg>
<div class="t" style="left:105px;top:5px;color:#8d8d9b;letter-spacing:-1.072px">Tasks</div>
<svg style="left:145px;top:6px" width="13" height="13" viewBox="0 0 13 13"><rect x="0.8" y="0.8" width="11.4" height="8.6" rx="1.2" fill="#f4f8fd" stroke="#1d4fa0" stroke-width="1.6"/><path d="M3 3.6 H8 M3 6 H9.6" stroke="#444" stroke-width="1"/><path d="M4.6 9.6 H8.4 L8.8 11 H4.2 Z" fill="#1d4fa0"/><rect x="2.4" y="11" width="8.2" height="1.6" rx="0.6" fill="#2a6ad0"/></svg>
<div class="t" style="left:162.39999999999998px;top:5px;letter-spacing:-0.072px">Console</div>
<svg style="left:214px;top:7.5px" width="11" height="11" viewBox="0 0 11 11"><path d="M0.6 2.6 L2.6 0.6 L5.5 3.5 L8.4 0.6 L10.4 2.6 L7.5 5.5 L10.4 8.4 L8.4 10.4 L5.5 7.5 L2.6 10.4 L0.6 8.4 L3.5 5.5 Z" fill="#fff" stroke="#3f3f3f" stroke-width="1" stroke-linejoin="round"/></svg>
<svg style="left:237px;top:6px;opacity:.6" width="14" height="13" viewBox="0 0 14 13"><rect x="0.5" y="0.5" width="13" height="12" fill="#fff" stroke="#8290b0" stroke-width="0.9"/><rect x="0.5" y="0.5" width="13" height="2.6" fill="#c4cce0" stroke="#8290b0" stroke-width="0.9"/><path d="M4.4 3 V12.4 M0.6 5.8 H13.4 M0.6 8.4 H13.4 M0.6 10.8 H13.4" stroke="#a8acb8" stroke-width="0.7"/></svg>
<div class="t" style="left:256px;top:5px;color:#8d8d9b;letter-spacing:-0.323px">Properties</div>
<svg style="left:319px;top:5px;opacity:.7" width="17" height="16" viewBox="0 0 17 16"><rect x="4.6" y="1" width="11.6" height="8.6" rx="1" fill="#ececec" stroke="#7c7c7c" stroke-width="1"/><rect x="6.6" y="2.8" width="7.4" height="4.8" fill="#3a55e0"/><rect x="7.4" y="3.6" width="3" height="1.6" fill="#8aa8f8"/><path d="M1.4 12.6 L5.6 7.8 L9.2 10.8 L5 15.4 Q2.2 15.8 1.4 12.6 Z" fill="#f6f6f6" stroke="#8a8a8a" stroke-width="0.8"/><path d="M5.2 8.6 L8.6 11.4" stroke="#e4d060" stroke-width="1.3"/></svg>
<div class="t" style="left:339px;top:5px;color:#8d8d9b;letter-spacing:-0.051px">Terminal</div>
<svg style="left:850px;top:4px" width="16" height="16" viewBox="0 0 16 16"><path d="M0.5 0.5 H7.2 L10.6 3.8 V14 H0.5 Z" fill="#fbfcfe" stroke="#c4ad78" stroke-width="1"/><path d="M7.2 0.5 V3.8 H10.6 Z" fill="#ecd9a8" stroke="#c4ad78" stroke-width="0.6"/><path d="M2.2 3.6 H5.8 M2.2 5.7 H8.6 M2.2 7.8 H8.6 M2.2 9.9 H8.6 M2.2 12 H7" stroke="#4a6cb8" stroke-width="1"/><path d="M9.2 9.4 L14.4 14.6 M14.4 9.4 L9.2 14.6" stroke="#8a8a8a" stroke-width="2.2" stroke-linecap="round"/></svg>
<svg style="left:873px;top:4px" width="16" height="17" viewBox="0 0 16 17"><rect x="1.6" y="1.6" width="13.4" height="13.4" fill="#eef6ff" stroke="#8296b8" stroke-width="1"/><rect x="10" y="2.2" width="4.4" height="12.2" fill="#fff" stroke="#8296b8" stroke-width="0.7"/><rect x="11.3" y="3.4" width="1.8" height="1.8" fill="#2a5ad0"/><rect x="11.3" y="11.4" width="1.8" height="1.8" fill="#2a5ad0"/><rect x="10.6" y="6.4" width="3.2" height="3.8" fill="#dfe6f4" stroke="#a8b4cc" stroke-width="0.5"/><path d="M2.6 10 V8.6 Q2.6 6.6 4.4 6.6 Q6.2 6.6 6.2 8.6 V10" fill="none" stroke="#c08a1c" stroke-width="1.4"/><rect x="0.7" y="9.6" width="7.4" height="6.2" rx="1.2" fill="#e2a828" stroke="#a87212" stroke-width="0.9"/><rect x="3.9" y="11.6" width="1" height="2.2" fill="#7a4e08"/></svg>
<svg style="left:896px;top:4px" width="16" height="16" viewBox="0 0 16 16"><path d="M0.5 0.5 H7.2 L10.6 3.8 V14 H0.5 Z" fill="#fbfcfe" stroke="#c4ad78" stroke-width="1"/><path d="M7.2 0.5 V3.8 H10.6 Z" fill="#ecd9a8" stroke="#c4ad78" stroke-width="0.6"/><path d="M2.2 3.6 H5.8 M2.2 5.7 H8.6 M2.2 7.8 H8.6 M2.2 9.9 H8.6 M2.2 12 H7" stroke="#4a6cb8" stroke-width="1"/><path d="M13 2.6 V9.4 H10 V7.2 L6 10.4 L10 13.6 V11.4 H15 V2.6 Z" fill="#fdf0c8" stroke="#dca83c" stroke-width="0.9" stroke-linejoin="round"/></svg>
<div class="abs" style="left:917px;top:3px;width:1px;height:18px;background:#8e8e96"></div>
<svg style="left:927px;top:4px" width="16" height="16" viewBox="0 0 16 16"><rect x="1.2" y="5.4" width="12.6" height="9.6" fill="#f8fbff" stroke="#8494ac" stroke-width="1"/><rect x="1.6" y="5.8" width="11.8" height="2.2" fill="#4a9ae4"/><path d="M7.4 9 L10.4 12.2" stroke="#3a4a5a" stroke-width="1"/><path d="M8 8.6 L10 5 L13 7.6 L10.2 9.6 Z" fill="#2f9a44"/><circle cx="12.2" cy="4.6" r="2.9" fill="#2eaa48" stroke="#1e8a36" stroke-width="0.6"/><path d="M10.8 4.4 L12.6 3 M12 5.8 L13.6 4.4" stroke="#7ad88a" stroke-width="0.8"/></svg>
<svg style="left:951.5999999999999px;top:4.600000000000023px" width="14" height="14" viewBox="0 0 14 14"><rect x="1.2" y="1.2" width="11.4" height="9.2" rx="1.4" fill="#f6f6f6" stroke="#9c9c9c" stroke-width="2"/><path d="M3.6 4.4 H8.6 M3.6 6.8 H10.4" stroke="#8a8a8a" stroke-width="1"/><rect x="5" y="11" width="4" height="1.4" fill="#a8a8a8"/><rect x="1.8" y="12.2" width="10.4" height="1.3" fill="#a0a0a0"/></svg>
<svg style="left:973px;top:10px" width="8" height="5" viewBox="0 0 8 5"><path d="M0.3 0.5 H7.7 L4 4.4 Z" fill="#8a8a8a"/></svg>
<svg style="left:988px;top:4px" width="17" height="16" viewBox="0 0 17 16"><rect x="1.4" y="3.6" width="12.8" height="11.2" fill="#f2fbff" stroke="#a48c54" stroke-width="1"/><rect x="1.4" y="3.2" width="12.8" height="2.6" fill="#3f92e0"/><path d="M4.4 14.6 Q10.6 14 12.2 8.4" fill="none" stroke="#f7e4a8" stroke-width="1.5"/><path d="M12.4 1.2 Q13 3.8 15.8 4.6 Q13 5.4 12.4 8 Q11.8 5.4 9 4.6 Q11.8 3.8 12.4 1.2 Z" fill="#fff" stroke="#c8982a" stroke-width="1.3" stroke-linejoin="round"/></svg>
<svg style="left:1010px;top:10px" width="8" height="5" viewBox="0 0 8 5"><path d="M0.3 0.5 H7.7 L4 4.4 Z" fill="#1a1a1a"/></svg>
<svg style="left:1028px;top:7px" width="10" height="5" viewBox="0 0 10 5"><rect x="0.5" y="0.5" width="9" height="3" fill="#fff" stroke="#5a5a5a" stroke-width="1"/></svg>
<svg style="left:1051px;top:7px" width="10" height="10" viewBox="0 0 10 10"><rect x="0.5" y="0.5" width="9" height="9" fill="#fff" stroke="#5a5a5a" stroke-width="1"/><path d="M0.5 2.5 H9.5" stroke="#5a5a5a" stroke-width="1"/></svg>
<div class="t" style="left:3.3999999999999773px;top:27px;letter-spacing:-0.109px">Log Console</div>
<div class="abs" style="left:3px;top:42px;width:1070px;height:1px;background:#9c9c9c"></div>
<div class="row cl mono" style="left:5px;top:44px">Newlib version: 2.4.0</div>
<div class="row cl mono" style="left:5px;top:62px">done!</div>
<div class="row cl mono" style="left:5px;top:80px">Newlib version: 4.3.0</div>
<div class="row cl mono" style="left:5px;top:98px">done!</div>
<div class="abs" style="left:1057px;top:44px;width:16px;height:151px;background:#f0f0f0"></div>
<div class="abs" style="left:3px;top:179px;width:1070px;height:16px;background:#f0f0f0"></div>
<svg style="left:1061px;top:50px" width="8" height="6" viewBox="0 0 8 6"><path d="M0.2 5.6 H7.8 L4 0.2 Z" fill="#a3a3a3"/></svg>
<svg style="left:1061px;top:167px" width="8" height="6" viewBox="0 0 8 6"><path d="M0.2 0.4 H7.8 L4 5.8 Z" fill="#a3a3a3"/></svg>
<svg style="left:8px;top:183px" width="6" height="8" viewBox="0 0 6 8"><path d="M5.6 0.2 V7.8 L0.2 4 Z" fill="#a3a3a3"/></svg>
<svg style="left:1045px;top:183px" width="6" height="8" viewBox="0 0 6 8"><path d="M0.4 0.2 V7.8 L5.8 4 Z" fill="#a3a3a3"/></svg>
</div>
<!-- STATUS BAR -->
<div id="status" class="abs" style="left:0;top:784px;width:1347px;height:25px;background:#e0e5f5">
<div class="abs" style="left:590px;top:1px;width:1px;height:22px;background:#8e8e96"></div><div class="abs" style="left:591px;top:1px;width:1px;height:22px;background:#f4f5fb"></div>
<div class="abs" style="left:694px;top:1px;width:1px;height:22px;background:#8e8e96"></div><div class="abs" style="left:695px;top:1px;width:1px;height:22px;background:#f4f5fb"></div>
<div class="abs" style="left:792px;top:1px;width:1px;height:22px;background:#8e8e96"></div><div class="abs" style="left:793px;top:1px;width:1px;height:22px;background:#f4f5fb"></div>
<div class="abs" style="left:1298px;top:1px;width:1px;height:22px;background:#8e8e96"></div><div class="abs" style="left:1299px;top:1px;width:1px;height:22px;background:#f4f5fb"></div>
<svg style="left:889px;top:6px" width="2" height="16" viewBox="0 0 2 16"><g fill="#b5a98c"><rect x="0" y="0" width="2" height="2"/><rect x="0" y="4.4" width="2" height="2"/><rect x="0" y="8.8" width="2" height="2"/><rect x="0" y="13.2" width="2" height="2"/></g></svg>
<svg style="left:1175px;top:6px" width="2" height="16" viewBox="0 0 2 16"><g fill="#b5a98c"><rect x="0" y="0" width="2" height="2"/><rect x="0" y="4.4" width="2" height="2"/><rect x="0" y="8.8" width="2" height="2"/><rect x="0" y="13.2" width="2" height="2"/></g></svg>
<div class="t" style="left:598px;top:5px;letter-spacing:0.2px">Writable</div>
<div class="t" style="left:702.4px;top:5px;letter-spacing:-0.233px">Smart Insert</div>
<div class="t" style="left:800px;top:5px;letter-spacing:-0.346px">44 : 2</div>
<div class="t" style="left:1186.4px;top:5px;letter-spacing:-0.549px">Cp1252</div>
<div class="t" style="left:1308.4px;top:5px;letter-spacing:-1.248px">CRLF</div>
</div>
</body>
</html>
